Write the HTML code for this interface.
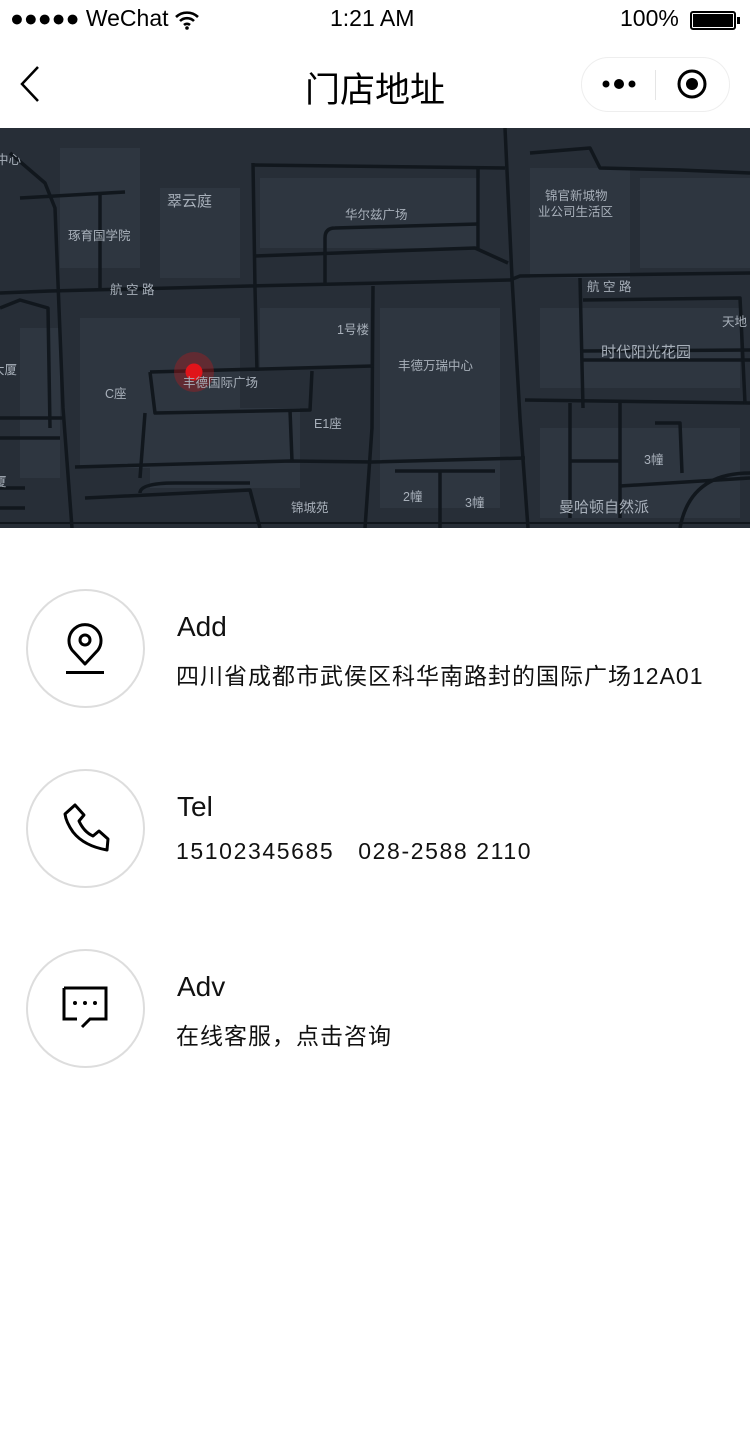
<!DOCTYPE html>
<html><head><meta charset="utf-8">
<style>
*{margin:0;padding:0;box-sizing:border-box}
body{width:750px;height:1450px;background:#fff;font-family:"Liberation Sans","Noto Sans CJK SC",sans-serif;position:relative;overflow:hidden;color:#000}
.abs{position:absolute}
.circle{position:absolute;left:26px;width:119px;height:119px;border:2px solid #ddd;border-radius:50%}
.t1{position:absolute;left:177px;font-size:28px;color:#111}
.t2{position:absolute;left:176px;font-size:23px;color:#111;white-space:nowrap}
</style></head><body>
<!-- status bar -->
<div class="abs" style="left:10px;top:5px;font-size:23px">●●●●● WeChat</div>
<svg class="abs" style="left:174px;top:10px" width="26" height="20" viewBox="0 0 26 20"><path d="M2 7a16 16 0 0 1 22 0M6 11a10 10 0 0 1 14 0M10 15a4.5 4.5 0 0 1 6 0" stroke="#000" stroke-width="2.6" fill="none"/><circle cx="13" cy="18" r="1.8"/></svg>
<div class="abs" style="left:330px;top:5px;font-size:23px">1:21 AM</div>
<div class="abs" style="left:620px;top:5px;font-size:23px">100%</div>
<div class="abs" style="left:690px;top:11px;width:46px;height:19px;border:2px solid #000;border-radius:3px;padding:1px"><div style="width:100%;height:100%;background:#000"></div></div>
<div class="abs" style="left:737px;top:17px;width:3px;height:7px;background:#000"></div>
<!-- nav -->
<svg class="abs" style="left:16px;top:64px" width="26" height="40" viewBox="0 0 26 40"><path d="M22 3L6 20l16 17" stroke="#000" stroke-width="2.5" fill="none"/></svg>
<div class="abs" style="left:0;width:750px;text-align:center;top:62px;font-size:35px">门店地址</div>
<div class="abs" style="left:581px;top:57px;width:149px;height:55px;border:1px solid #eee;border-radius:28px"></div>
<div class="abs" style="left:655px;top:70px;width:1px;height:30px;background:#e5e5e5"></div>
<svg class="abs" style="left:600px;top:74px" width="40" height="20"><circle cx="6" cy="10" r="3.5"/><circle cx="19" cy="10" r="5"/><circle cx="32" cy="10" r="3.5"/></svg>
<svg class="abs" style="left:676px;top:68px" width="32" height="32"><circle cx="16" cy="16" r="13" stroke="#000" stroke-width="3" fill="none"/><circle cx="16" cy="16" r="6"/></svg>
<!-- map -->
<svg class="abs" style="left:0;top:128px" width="750" height="400" viewBox="0 0 750 400">
<rect width="750" height="400" fill="#272e37"/>
<g fill="#2e3640">
<rect x="60" y="20" width="80" height="120"/><rect x="160" y="60" width="80" height="90"/><rect x="260" y="50" width="220" height="70"/>
<rect x="530" y="40" width="100" height="110"/><rect x="640" y="50" width="110" height="90"/>
<rect x="80" y="190" width="160" height="150"/><rect x="260" y="180" width="110" height="60"/><rect x="380" y="180" width="120" height="200"/>
<rect x="540" y="180" width="200" height="80"/><rect x="540" y="300" width="200" height="90"/><rect x="150" y="280" width="150" height="80"/>
<rect x="20" y="200" width="40" height="150"/>
</g>
<g stroke="#11171d" stroke-width="3.5" fill="none" stroke-linejoin="round">
<path d="M0 165L50 163L250 158L510 152L520 148L750 145"/>
<path d="M10 25L45 55L55 80L63 280L72 400"/>
<path d="M253 35L255 160L257 243"/>
<path d="M373 158L372 300L365 400"/>
<path d="M505 0L512 150L520 290L528 400"/>
<path d="M253 37L505 40"/>
<path d="M255 128L475 120L508 135"/>
<path d="M325 110V155"/>
<path d="M478 40V120"/>
<path d="M325 110Q325 100 335 100L478 96"/>
<path d="M150 244L373 238"/>
<path d="M150 244L155 285L310 282L312 243"/>
<path d="M145 285L140 350"/>
<path d="M75 339L290 333L372 334L525 330"/>
<path d="M290 282L292 333"/>
<path d="M100 64V160"/><path d="M20 70L125 64"/>
<path d="M0 180L20 172L48 180L50 300"/>
<path d="M525 272L750 275"/>
<path d="M580 150L583 280"/>
<path d="M583 172L740 170L745 275"/>
<path d="M583 223L750 222M583 232L750 232"/>
<path d="M570 275V390"/><path d="M620 275V390"/><path d="M570 333H620"/>
<path d="M620 358L750 350"/>
<path d="M655 295H680L682 345"/>
<path d="M680 400Q690 345 750 345"/>
<path d="M0 310H60M0 290H62"/>
<path d="M0 360H25M0 380H25"/>
<path d="M85 370L250 362L260 400"/>
<path d="M395 343H495M440 343V400"/>
<path d="M530 25L590 20L600 40L680 42L750 45"/>
<path d="M0 395H750" stroke-width="2"/>
<path d="M140 365Q140 355 175 355H250"/>
</g>
<circle cx="194" cy="244" r="20" fill="#c0171b" opacity="0.35"/>
<circle cx="194" cy="244" r="8.5" fill="#e0141a"/>
<g fill="#a8b0ba" font-family="Liberation Sans,Noto Sans CJK SC,sans-serif" font-size="12.5">
<text x="-4" y="36">中心</text>
<text x="167" y="78" font-size="15">翠云庭</text>
<text x="68" y="112">琢育国学院</text>
<text x="345" y="91">华尔兹广场</text>
<text x="545" y="72">锦官新城物</text><text x="538" y="88">业公司生活区</text>
<text x="110" y="166">航 空 路</text>
<text x="587" y="163">航 空 路</text>
<text x="722" y="198">天地</text>
<text x="337" y="206">1号楼</text>
<text x="601" y="229" font-size="15">时代阳光花园</text>
<text x="398" y="242">丰德万瑞中心</text>
<text x="-8" y="246">大厦</text>
<text x="183" y="259">丰德国际广场</text>
<text x="105" y="270">C座</text>
<text x="314" y="300">E1座</text>
<text x="644" y="336">3幢</text>
<text x="-6" y="358">厦</text>
<text x="403" y="373">2幢</text>
<text x="465" y="379">3幢</text>
<text x="291" y="384">锦城苑</text>
<text x="559" y="384" font-size="15">曼哈顿自然派</text>
</g>
</svg>
<!-- items -->
<div class="circle" style="top:589px"></div>
<svg class="abs" style="left:62px;top:620px" width="46" height="56" viewBox="0 0 46 56"><path d="M23 44L10 30A16 16 0 1 1 36 30Z" stroke="#000" stroke-width="3" fill="none" stroke-linejoin="round"/><circle cx="23" cy="20" r="5" stroke="#000" stroke-width="3" fill="none"/><rect x="4" y="51" width="38" height="3"/></svg>
<div class="t1" style="top:611px">Add</div>
<div class="t2" style="top:657px;letter-spacing:1px">四川省成都市武侯区科华南路封的国际广场12A01</div>

<div class="circle" style="top:769px"></div>
<svg class="abs" style="left:60px;top:802px" width="52" height="52" viewBox="0 0 52 52"><path d="M5 12L15 3L24 13L19 19Q24 30 33 34L39 29L48 37L47 48Q24 44 13 30Q6 20 5 12Z" stroke="#000" stroke-width="3" fill="none" stroke-linejoin="round"/></svg>
<div class="t1" style="top:791px">Tel</div>
<div class="t2" style="top:838px;letter-spacing:1.6px">15102345685&nbsp;&nbsp;&nbsp;028-2588 2110</div>

<div class="circle" style="top:949px"></div>
<svg class="abs" style="left:60px;top:985px" width="50" height="46" viewBox="0 0 50 46"><path d="M4 3H46V34H30L22 42M4 3V34H17" stroke="#000" stroke-width="3" fill="none"/><circle cx="15" cy="18" r="2"/><circle cx="25" cy="18" r="2"/><circle cx="35" cy="18" r="2"/></svg>
<div class="t1" style="top:971px">Adv</div>
<div class="t2" style="top:1017px;letter-spacing:1px">在线客服，点击咨询</div>
</body></html>
